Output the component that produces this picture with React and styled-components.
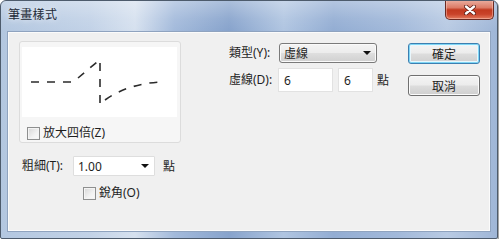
import React from 'react';
import styled, { createGlobalStyle } from 'styled-components';

const GlobalStyle = createGlobalStyle`
  html, body {
    margin: 0;
    padding: 0;
    background: #ffffff;
  }
  body {
    font-family: 'Noto Sans', 'Noto Sans CJK TC', sans-serif;
  }
`;

const StyledWindow = styled.div`
  box-sizing: border-box;
  width: 498px;
  height: 239px;
  border: 1px solid #4d5b6c;
  border-radius: 6px 6px 2px 2px;
  display: flex;
  flex-direction: column;
  overflow: hidden;
  background: linear-gradient(
    90deg,
    #b3c7e0 0%,
    #c2d2e7 18%,
    #d6e1ef 27%,
    #a3badb 35%,
    #87a3cc 46%,
    #b0c5e1 57%,
    #93add3 67%,
    #a2b9da 80%,
    #b8cae3 90%,
    #9fb6d7 100%
  );
  box-shadow: 1px 1px 0 rgba(0, 0, 0, 0.35);
`;

const StyledTitleBar = styled.div`
  height: 30px;
  display: flex;
  align-items: flex-start;
  justify-content: space-between;
  background: linear-gradient(
    180deg,
    rgba(255, 255, 255, 0.3) 0%,
    rgba(255, 255, 255, 0.08) 60%,
    rgba(255, 255, 255, 0) 100%
  );
`;

const StyledTitle = styled.span`
  margin: 6px 0 0 7px;
  font-size: 12px;
  line-height: 16px;
  color: #1c2836;
  letter-spacing: 0.3px;
  text-shadow: 0 0 6px rgba(255, 255, 255, 0.9);
`;

const StyledClose = styled.div`
  box-sizing: border-box;
  width: 49px;
  height: 20px;
  margin: -1px 3px 0 0;
  border: 1px solid #6b2a22;
  border-top: none;
  border-radius: 0 0 5px 5px;
  display: flex;
  align-items: center;
  justify-content: center;
  background: linear-gradient(
    180deg,
    #ebb0a2 0%,
    #dc7b66 40%,
    #c2391f 52%,
    #c9432a 75%,
    #e37b5e 100%
  );
  box-shadow: inset 0 0 0 1px rgba(255, 210, 200, 0.45);
`;

const StyledClient = styled.div`
  box-sizing: border-box;
  height: 201px;
  margin: 0 6px;
  border: 1px solid #8fa3bf;
  background: #f0f0f0;
  box-shadow: inset 0 0 0 1px #fbfbfb;
  display: flex;
  padding: 9px 10px 0 11px;
`;

const StyledLeftCol = styled.div`
  width: 162px;
  display: flex;
  flex-direction: column;
`;

const StyledPreview = styled.div`
  box-sizing: border-box;
  height: 102px;
  border: 1px solid #dcdcdc;
  border-radius: 3px;
  background: #f6f6f6;
  padding: 5px 3px 0 2px;
  display: flex;
  flex-direction: column;
`;

const StyledCanvas = styled.div`
  height: 70px;
  background: #ffffff;
`;

const StyledCheckRow = styled.label`
  display: flex;
  align-items: center;
  gap: 3px;
  font-size: 12px;
  line-height: 16px;
  color: #1e1e1e;
  margin: ${(p) => p.$margin || '0'};
`;

const StyledCheckbox = styled.span`
  box-sizing: border-box;
  width: 13px;
  height: 13px;
  border: 1px solid #8e8f8f;
  background: linear-gradient(135deg, #d6d6d6 0%, #f2f2f2 60%, #fbfbfb 100%);
  box-shadow: inset 0 0 0 1px #f4f4f4;
`;

const StyledFieldRow = styled.div`
  display: flex;
  align-items: center;
  margin-top: ${(p) => p.$top || 0}px;
  padding-left: ${(p) => p.$indent || 0}px;
`;

const StyledLabel = styled.span`
  width: ${(p) => p.$width}px;
  font-size: 12px;
  line-height: 16px;
  color: #1e1e1e;
  white-space: nowrap;
`;

const StyledUnit = styled.span`
  margin-left: ${(p) => p.$gap}px;
  font-size: 12px;
  color: #1e1e1e;
`;

const StyledCombo = styled.div`
  box-sizing: border-box;
  width: ${(p) => p.$width}px;
  height: 20px;
  display: flex;
  align-items: center;
  justify-content: space-between;
  padding: 0 5px 0 4px;
  font-size: 12px;
  color: #1e1e1e;
  border-radius: ${(p) => (p.$button ? '3px' : '1px')};
  border: 1px solid ${(p) => (p.$button ? '#7a7a7a' : '#dedede')};
  background: ${(p) =>
    p.$button
      ? 'linear-gradient(180deg, #f4f4f4 0%, #ececec 48%, #dedede 52%, #d0d0d0 100%)'
      : '#ffffff'};
  box-shadow: ${(p) => (p.$button ? 'inset 0 0 0 1px #fafafa' : 'none')};
`;

const StyledArrow = styled.span`
  width: 0;
  height: 0;
  border-left: 4px solid transparent;
  border-right: 4px solid transparent;
  border-top: 4px solid #111;
`;

const StyledMiddleCol = styled.div`
  margin-left: 48px;
  padding-top: 2px;
  flex: 1;
  display: flex;
  flex-direction: column;
`;

const StyledInput = styled.div`
  box-sizing: border-box;
  width: ${(p) => p.$width}px;
  height: 24px;
  margin-left: ${(p) => p.$gap || 0}px;
  padding-left: 5px;
  display: flex;
  align-items: center;
  font-size: 12px;
  color: #1e1e1e;
  background: #ffffff;
  border: 1px solid #e2e2e2;
`;

const StyledButtonCol = styled.div`
  padding-top: 2px;
  width: 72px;
  display: flex;
  flex-direction: column;
  gap: 11px;
`;

const StyledButton = styled.div`
  box-sizing: border-box;
  height: 21px;
  display: flex;
  align-items: center;
  justify-content: center;
  font-size: 12px;
  color: #1e1e1e;
  border-radius: 3px;
  border: 1px solid ${(p) => (p.$default ? '#3c7fb1' : '#707070')};
  background: linear-gradient(180deg, #f4f4f4 0%, #ececec 48%, #dddddd 52%, #cfcfcf 100%);
  box-shadow: ${(p) =>
    p.$default
      ? 'inset 0 0 0 1px #7fd6f5, inset 0 0 0 2px #e9f7fd'
      : 'inset 0 0 0 1px #fbfbfb'};
`;

const Checkbox = ({ label, margin }) => (
  <StyledCheckRow $margin={margin}>
    <StyledCheckbox />
    {label}
  </StyledCheckRow>
);

const StrokePreview = () => (
  <svg width="157" height="70" viewBox="0 0 157 70">
    <g fill="none" stroke="#2b2b2b" strokeWidth="1.6" strokeDasharray="8 8">
      <path d="M9 35 H53" />
      <path d="M56 31 L75 15" />
      <path d="M78 16 V59" />
      <path d="M83 53 Q105.5 37 138 35" />
    </g>
  </svg>
);

export default function App() {
  return (
    <>
      <GlobalStyle />
      <StyledWindow>
        <StyledTitleBar>
          <StyledTitle>筆畫樣式</StyledTitle>
          <StyledClose>
            <svg width="12" height="10" viewBox="0 0 12 10">
              <path
                d="M2 1.5 L10 8.5 M10 1.5 L2 8.5"
                stroke="#5a1a12"
                strokeWidth="4"
                strokeLinecap="round"
              />
              <path
                d="M2 1.5 L10 8.5 M10 1.5 L2 8.5"
                stroke="#ffffff"
                strokeWidth="2.4"
                strokeLinecap="round"
              />
            </svg>
          </StyledClose>
        </StyledTitleBar>
        <StyledClient>
          <StyledLeftCol>
            <StyledPreview>
              <StyledCanvas>
                <StrokePreview />
              </StyledCanvas>
              <Checkbox label="放大四倍(Z)" margin="8px 0 0 5px" />
            </StyledPreview>
            <StyledFieldRow $top={13} $indent={3}>
              <StyledLabel $width={51}>粗細(T):</StyledLabel>
              <StyledCombo $width={82}>
                <span>1.00</span>
                <StyledArrow />
              </StyledCombo>
              <StyledUnit $gap={8}>點</StyledUnit>
            </StyledFieldRow>
            <Checkbox label="銳角(O)" margin="9px 0 0 64px" />
          </StyledLeftCol>
          <StyledMiddleCol>
            <StyledFieldRow>
              <StyledLabel $width={50}>類型(Y):</StyledLabel>
              <StyledCombo $width={98} $button>
                <span>虛線</span>
                <StyledArrow />
              </StyledCombo>
            </StyledFieldRow>
            <StyledFieldRow $top={5}>
              <StyledLabel $width={49}>虛線(D):</StyledLabel>
              <StyledInput $width={55}>6</StyledInput>
              <StyledInput $width={35} $gap={5}>6</StyledInput>
              <StyledUnit $gap={4}>點</StyledUnit>
            </StyledFieldRow>
          </StyledMiddleCol>
          <StyledButtonCol>
            <StyledButton $default>確定</StyledButton>
            <StyledButton>取消</StyledButton>
          </StyledButtonCol>
        </StyledClient>
      </StyledWindow>
    </>
  );
}
